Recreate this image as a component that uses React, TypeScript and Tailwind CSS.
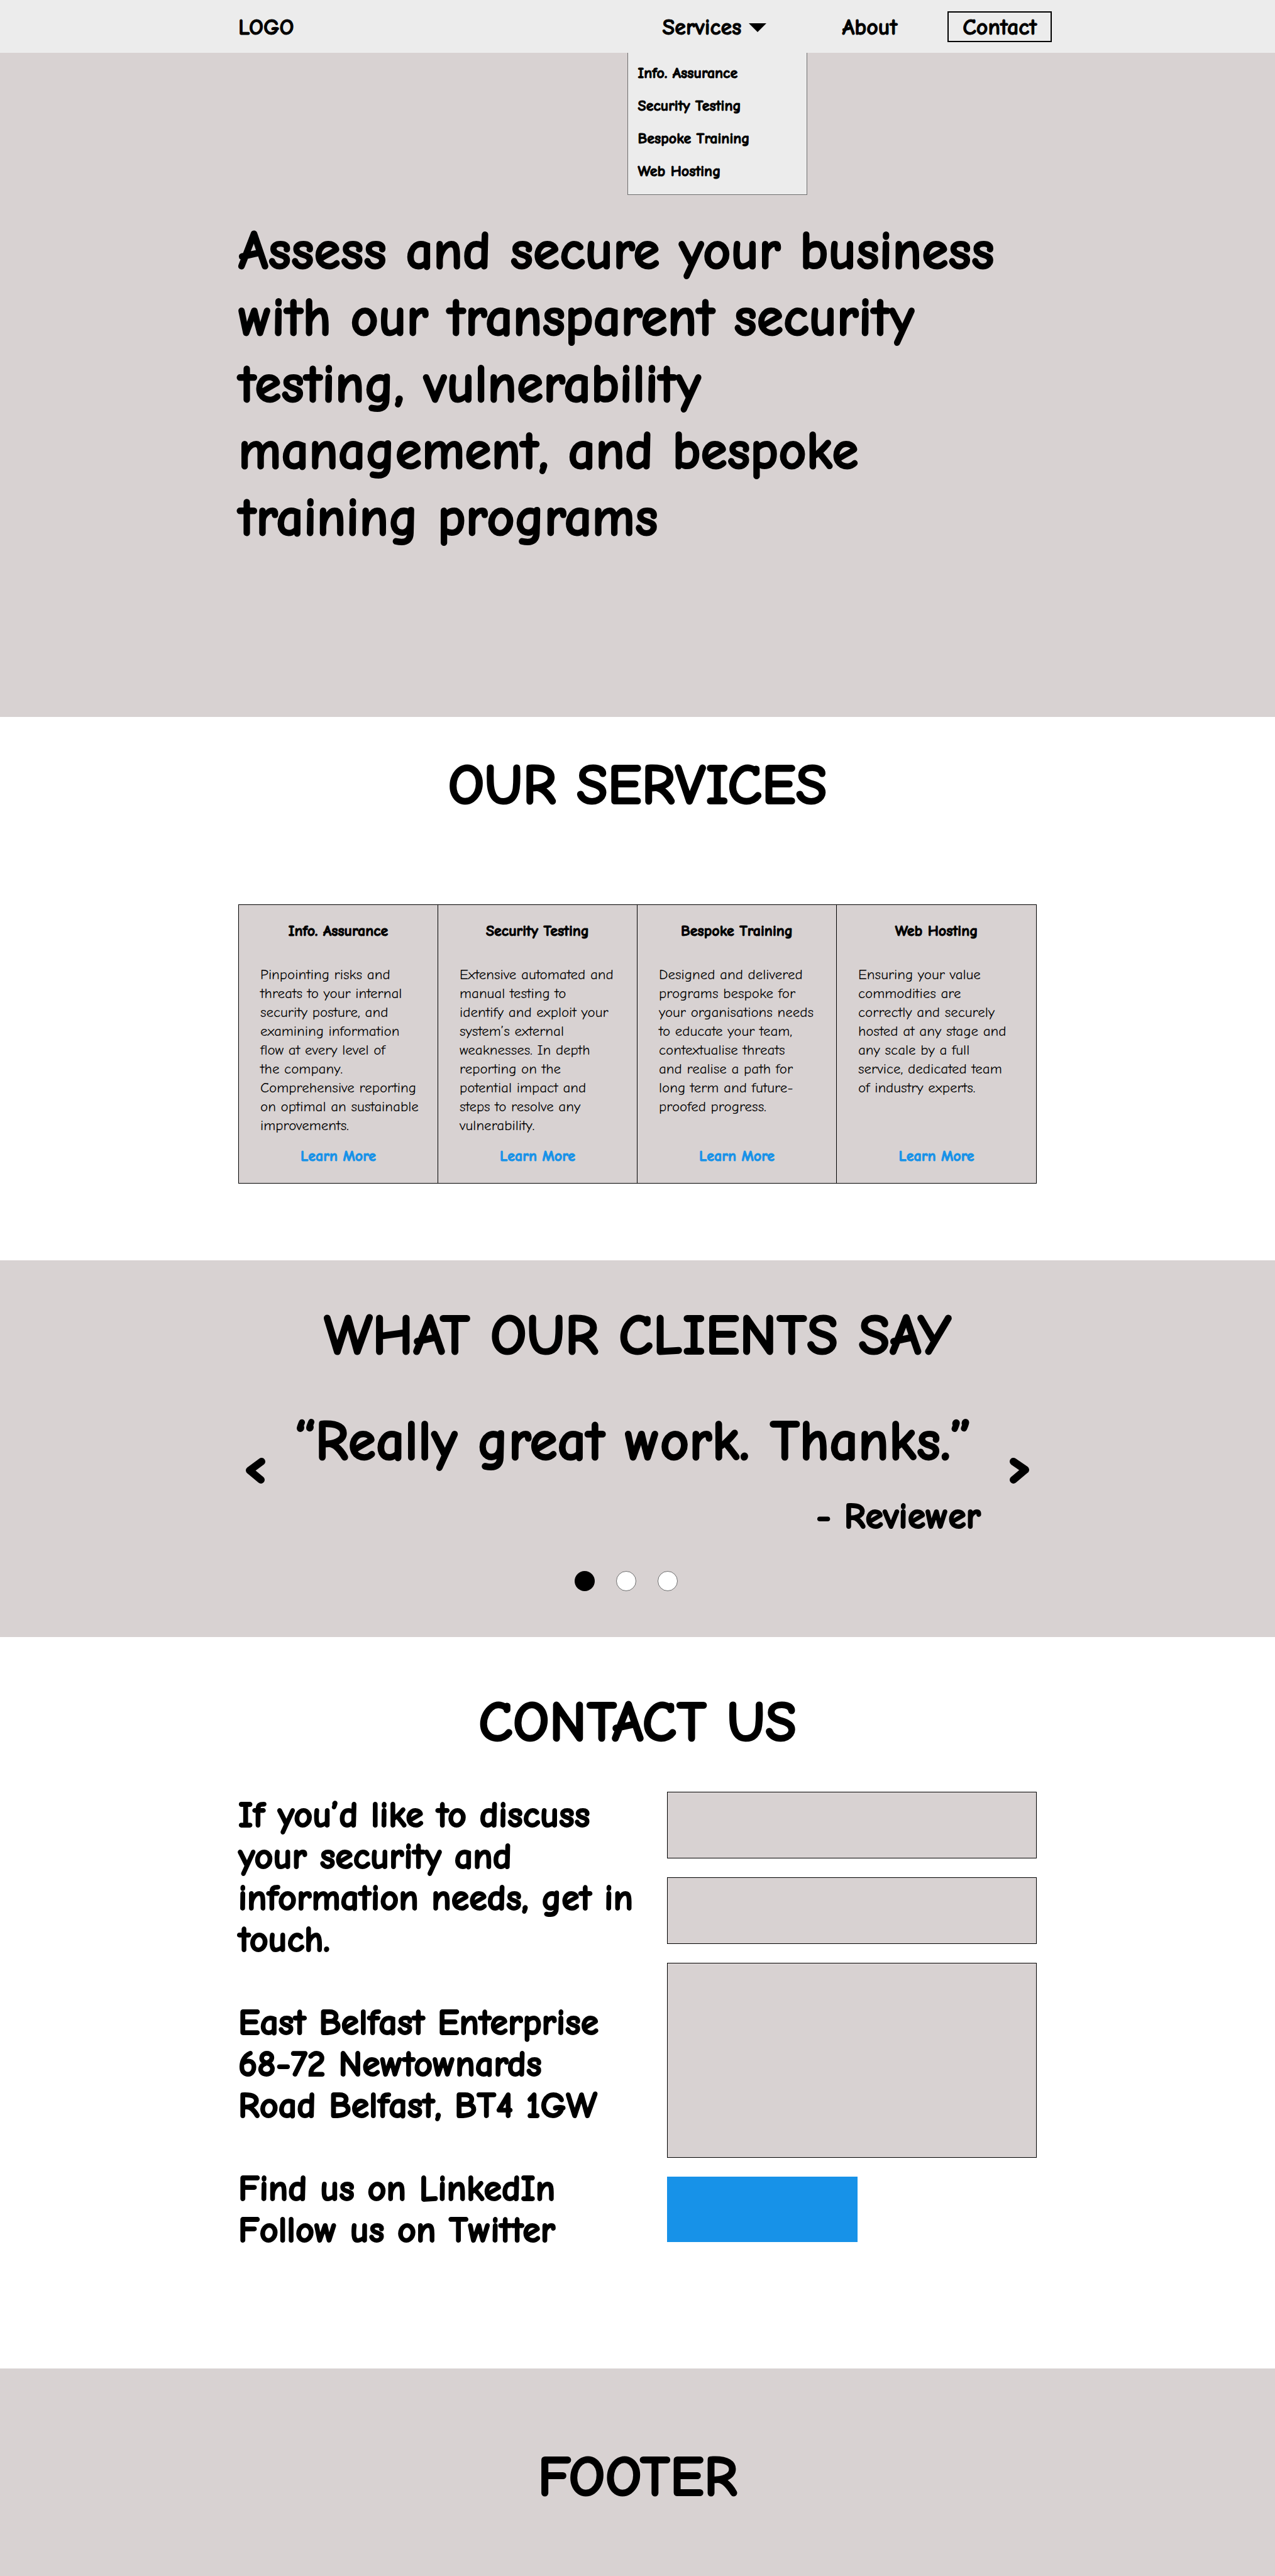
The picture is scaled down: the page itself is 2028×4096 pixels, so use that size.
import React from "react";

const services = [
  {
    title: "Info. Assurance",
    text: "Pinpointing risks and\nthreats to your internal\nsecurity posture, and\nexamining information\nflow at every level of\nthe company.\nComprehensive reporting\non optimal an sustainable\nimprovements.",
  },
  {
    title: "Security Testing",
    text: "Extensive automated and\nmanual testing to\nidentify and exploit your\nsystem’s external\nweaknesses. In depth\nreporting on the\npotential impact and\nsteps to resolve any\nvulnerability.",
  },
  {
    title: "Bespoke Training",
    text: "Designed and delivered\nprograms bespoke for\nyour organisations needs\nto educate your team,\ncontextualise threats\nand realise a path for\nlong term and future-\nproofed progress.",
  },
  {
    title: "Web Hosting",
    text: "Ensuring your value\ncommodities are\ncorrectly and securely\nhosted at any stage and\nany scale by a full\nservice, dedicated team\nof industry experts.",
  },
];

function Container({ children, className = "" }: { children: React.ReactNode; className?: string }) {
  return <div className={`mx-auto w-full max-w-[1270px] ${className}`}>{children}</div>;
}

function SectionTitle({ children }: { children: React.ReactNode }) {
  return <h2 className="text-center text-[91px] leading-[106px] font-bold [-webkit-text-stroke:2px]">{children}</h2>;
}

function Header() {
  return (
    <header className="bg-[#ececec]">
      <Container className="flex h-[84px] items-center justify-between [-webkit-text-stroke:1px]">
        <a href="#" className="pt-1 text-[36px] leading-[48px] font-bold">LOGO</a>
        <nav className="-mr-6 flex h-full items-center">
          <div className="relative mr-[120px] flex h-full items-center">
            <button type="button" aria-expanded="true" className="flex items-center gap-3 pt-1 text-[36px] leading-[48px] font-bold">
              Services
              <svg viewBox="0 0 28 14" className="h-[14px] w-7" aria-hidden="true">
                <path d="M0 0H28L14 14Z" fill="black" />
              </svg>
            </button>
            <ul className="absolute top-full -left-14 z-10 w-[286px] border border-t-0 border-[#6e6e6e] bg-[#ececec] px-4 pt-2 pb-[9px]">
              {services.map((s) => (
                <li key={s.title} className="h-[52px]">
                  <a href="#services" className="text-[24px] leading-[48px] font-bold whitespace-nowrap">{s.title}</a>
                </li>
              ))}
            </ul>
          </div>
          <a href="#about" className="mr-20 pt-1 text-[36px] leading-[48px] font-bold">About</a>
          <a href="#contact" className="border-2 border-black px-[22px] pt-[3px] text-[36px] leading-[42px] font-bold">Contact</a>
        </nav>
      </Container>
    </header>
  );
}

function Arrow({ d, label }: { d: string; label: string }) {
  return (
    <button type="button" aria-label={label} className="mb-2 p-2">
      <svg viewBox="0 0 34 44" className="h-11 w-[34px]" fill="none" stroke="black" strokeWidth="12" strokeLinecap="round" strokeLinejoin="round" aria-hidden="true">
        <path d={d} />
      </svg>
    </button>
  );
}

export default function App() {
  return (
    <div className="min-h-screen w-full bg-white font-['Comic_Neue','Comic_Sans_MS','Noto_Sans',sans-serif] text-black">
      <Header />

      <main>
        <section className="bg-[#d8d2d2] pt-[263px] pb-[263px]">
          <Container>
            <h1 className="max-w-[1216px] text-[86px] leading-[106px] font-bold [-webkit-text-stroke:2px]">
              Assess and secure your business with our transparent security testing, vulnerability management, and bespoke training programs
            </h1>
          </Container>
        </section>

        <section id="services" className="pt-[56px] pb-[122px]">
          <SectionTitle>OUR SERVICES</SectionTitle>
          <Container className="mt-[136px] grid grid-cols-4 border border-black bg-[#d8d2d2]">
            {services.map((s) => (
              <article key={s.title} className="flex flex-col border-r border-black pt-[26px] pb-[28px] last:border-r-0">
                <h3 className="text-center text-[24px] leading-[30px] font-bold [-webkit-text-stroke:1px]">{s.title}</h3>
                <p className="mt-10 mb-[18px] flex-1 pr-4 pl-[34px] text-[23px] leading-[30px] whitespace-pre-line">{s.text}</p>
                <a href="#services" className="text-center text-[24px] leading-[30px] font-bold text-[#1792e8] [-webkit-text-stroke:1px]">Learn More</a>
              </article>
            ))}
          </Container>
        </section>

        <section className="bg-[#d8d2d2] pt-[67px] pb-[73px]">
          <SectionTitle>WHAT OUR CLIENTS SAY</SectionTitle>
          <Container className="mt-[62px] flex items-center justify-between px-0.5">
            <Arrow d="M27 8L8 22L26 37" label="Previous review" />
            <figure className="w-[1092px] font-bold">
              <blockquote className="text-[90px] leading-[106px] whitespace-nowrap [-webkit-text-stroke:2px]">“Really great work. Thanks.”</blockquote>
              <figcaption className="mt-[34px] text-right text-[58px] leading-[66px] [-webkit-text-stroke:2px]">- Reviewer</figcaption>
            </figure>
            <Arrow d="M7 8L26 21L7 37" label="Next review" />
          </Container>
          <div className="mt-[53px] flex justify-center gap-[34px] pr-9">
            <button type="button" aria-label="Review 1" aria-current="true" className="size-8 rounded-full bg-black" />
            <button type="button" aria-label="Review 2" className="size-8 rounded-full border border-[#6e6e6e] bg-white" />
            <button type="button" aria-label="Review 3" className="size-8 rounded-full border border-[#6e6e6e] bg-white" />
          </div>
        </section>

        <section id="contact" className="pt-[83px] pb-[186px]">
          <SectionTitle>CONTACT US</SectionTitle>
          <Container className="mt-[57px] flex items-start justify-between">
            <div className="w-[640px] space-y-[66px] pt-[5px] text-[58px] leading-[66px] font-bold [-webkit-text-stroke:2px]">
              <p>If you’d like to discuss your security and information needs, get in touch.</p>
              <address className="not-italic">
                East Belfast Enterprise<br />
                68-72 Newtownards<br />
                Road Belfast, BT4 1GW
              </address>
              <p>
                <a href="#linkedin" className="block">Find us on LinkedIn</a>
                <a href="#twitter" className="block">Follow us on Twitter</a>
              </p>
            </div>
            <form className="flex w-[588px] flex-col gap-[30px]">
              <input type="text" aria-label="Name" className="h-[106px] w-full border border-black bg-[#d8d2d2] px-4 text-[24px]" />
              <input type="email" aria-label="Email" className="h-[106px] w-full border border-black bg-[#d8d2d2] px-4 text-[24px]" />
              <textarea aria-label="Message" className="h-[310px] w-full resize-none border border-black bg-[#d8d2d2] p-4 text-[24px]" />
              <button type="submit" aria-label="Send" className="h-[104px] w-[303px] bg-[#1792e8]" />
            </form>
          </Container>
        </section>
      </main>

      <footer className="bg-[#d8d2d2] pt-[120px] pb-[105px]">
        <SectionTitle>FOOTER</SectionTitle>
      </footer>
    </div>
  );
}
